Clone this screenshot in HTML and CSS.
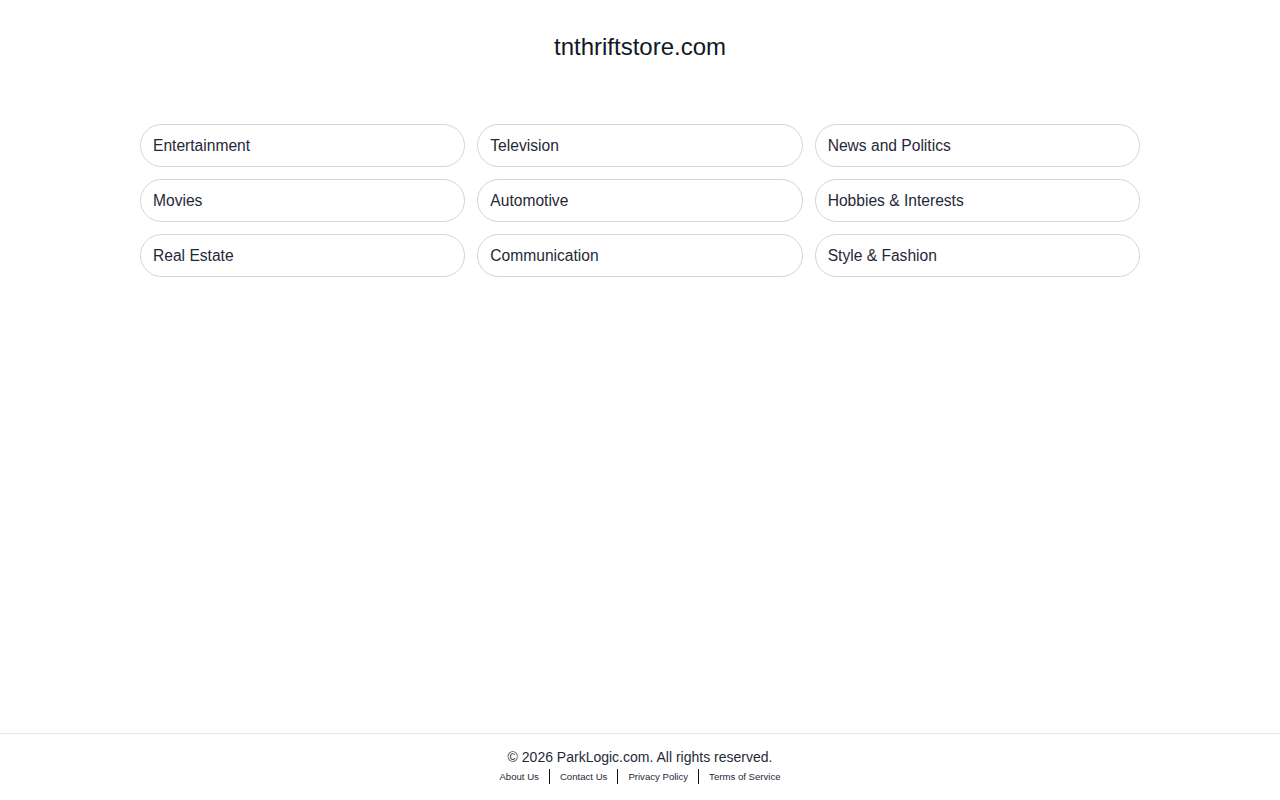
FILE: index.html
```html
<!DOCTYPE html>
<html lang="en">
<head>
    <meta charset="UTF-8">
    <title>tnthriftstore.com</title>
    <link rel="stylesheet" href="styles.css">
</head>
<body>

<div class="page">
    <header class="site-head">
        <h1>tnthriftstore.com</h1>
    </header>

    <main class="topics">
        <a class="topic" href="#">Entertainment</a>
        <a class="topic" href="#">Television</a>
        <a class="topic" href="#">News and Politics</a>
        <a class="topic" href="#">Movies</a>
        <a class="topic" href="#">Automotive</a>
        <a class="topic" href="#">Hobbies &amp; Interests</a>
        <a class="topic" href="#">Real Estate</a>
        <a class="topic" href="#">Communication</a>
        <a class="topic" href="#">Style &amp; Fashion</a>
    </main>

    <footer class="site-foot">
        <p class="copy">&copy; 2026 ParkLogic.com. All rights reserved.</p>
        <nav class="foot-links">
            <a href="#">About Us</a>
            <a href="#">Contact Us</a>
            <a href="#">Privacy Policy</a>
            <a href="#">Terms of Service</a>
        </nav>
    </footer>
</div>

</body>
</html>
```

FILE: styles.css
```css
html, body {
    margin: 0;
    padding: 0;
}
body {
    font-family: "Liberation Sans", Arial, sans-serif;
    color: #1f2937;
    background: #fff;
}
.page {
    display: flex;
    flex-direction: column;
    min-height: 100vh;
}

.site-head {
    text-align: center;
    padding-top: 33px;
}
.site-head h1 {
    margin: 0;
    font-size: 24px;
    font-weight: normal;
    line-height: 28px;
    color: #111827;
}

.topics {
    flex: 1;
    align-self: center;
    width: 1000px;
    margin-top: 63px;
    display: grid;
    grid-template-columns: repeat(3, 1fr);
    grid-auto-rows: 43px;
    gap: 12px;
    align-content: start;
}
.topic {
    display: flex;
    align-items: center;
    padding: 0 12px;
    border: 1px solid #d1d5db;
    border-radius: 22px;
    font-size: 15.6px;
    color: #1f2937;
    text-decoration: none;
}
.topic:hover {
    background: #f9fafb;
}

.site-foot {
    border-top: 1px solid #e5e7eb;
    padding: 14px 0 16px;
    text-align: center;
}
.copy {
    margin: 0;
    font-size: 14px;
    line-height: 18px;
    color: #1f2937;
}
.foot-links {
    display: flex;
    justify-content: center;
    margin-top: 3px;
}
.foot-links a {
    font-size: 9.6px;
    line-height: 15px;
    color: #1f2937;
    text-decoration: none;
    padding: 0 10px;
    border-left: 1px solid #111;
}
.foot-links a:first-child {
    border-left: 0;
}
```
